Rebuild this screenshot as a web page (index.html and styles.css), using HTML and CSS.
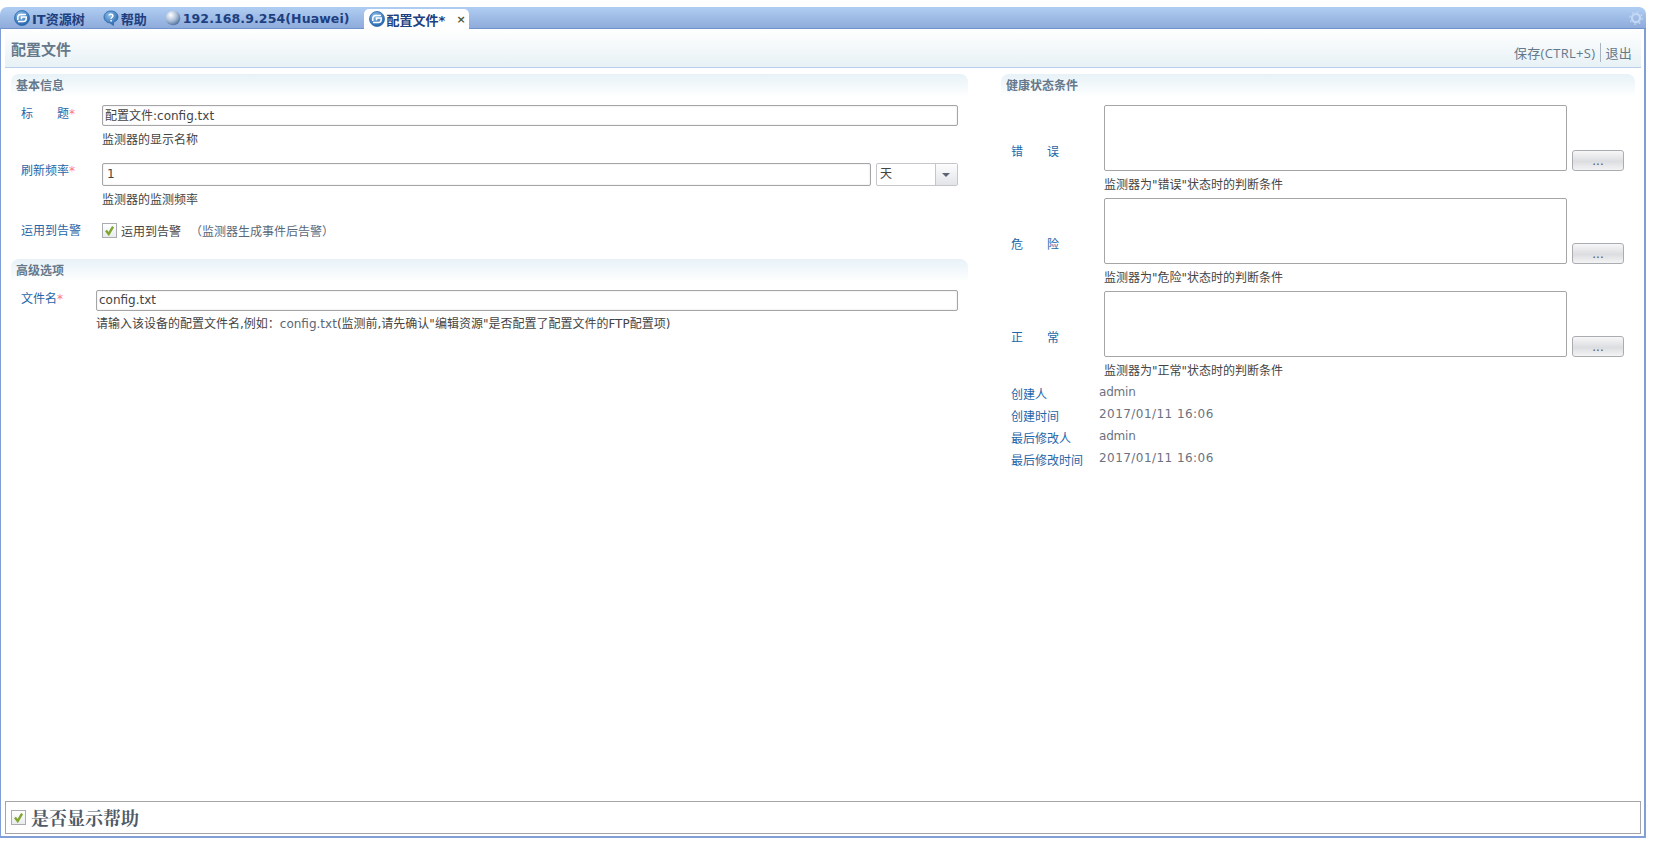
FILE: index.html
```html
<!DOCTYPE html>
<html lang="zh-CN">
<head>
    <meta charset="UTF-8">
    <title>配置文件</title>
    <link rel="stylesheet" href="styles.css">
</head>
<body>
    <svg class="svg-defs" width="0" height="0">
        <defs>
            <radialGradient id="blueBall" cx="40%" cy="30%" r="75%">
                <stop offset="0" stop-color="#8fc0ea"/>
                <stop offset="1" stop-color="#1f5fa8"/>
            </radialGradient>
            <radialGradient id="greyBall" cx="35%" cy="30%" r="75%">
                <stop offset="0" stop-color="#ffffff"/>
                <stop offset="0.55" stop-color="#a9bdd6"/>
                <stop offset="1" stop-color="#4d6f9c"/>
            </radialGradient>
            <symbol id="swirl" viewBox="0 0 16 16">
                <circle cx="8" cy="8" r="7.5" fill="url(#blueBall)" stroke="#2a6aad" stroke-width="0.8"/>
                <path d="M12 4.5H6.5C4.5 4.5 3.8 6 3.8 7.5V10M4 11.5H9.5C11.5 11.5 12.2 10 12.2 8.5V7H7.5V9.2" fill="none" stroke="#fff" stroke-width="1.5"/>
            </symbol>
        </defs>
    </svg>

    <div class="window">
        <div class="tabbar">
            <a class="tab"><svg class="tab-icon"><use href="#swirl"/></svg>IT资源树</a>
            <a class="tab">
                <svg class="tab-icon" viewBox="0 0 16 16">
                    <path d="M8 1C3.8 1 1 3.7 1 7c0 3.2 2.6 5.8 6 5.9L10.5 15.5V12.3C13.3 11.2 15 9.4 15 7c0-3.3-2.8-6-7-6Z" fill="url(#blueBall)" stroke="#2a6aad" stroke-width="0.8"/>
                    <path d="M6 5.3C6.3 4 9.8 3.9 9.9 5.8 10 7.2 8.2 7.2 8.1 8.8M8.1 10v1.4" fill="none" stroke="#fff" stroke-width="1.5"/>
                </svg>帮助
            </a>
            <a class="tab tab-ip">
                <svg class="tab-icon" viewBox="0 0 16 16">
                    <circle cx="8" cy="8" r="7.3" fill="url(#greyBall)"/>
                </svg>192.168.9.254(Huawei)
            </a>
            <a class="tab tab-active">
                <svg class="tab-icon"><use href="#swirl"/></svg>配置文件*
                <span class="tab-close">×</span>
            </a>
            <svg class="gear" viewBox="0 0 16 16">
                <circle cx="8" cy="8" r="4.6" fill="none" stroke="#c3d8f2" stroke-width="2.6"/>
                <circle cx="8" cy="8" r="7" fill="none" stroke="#c3d8f2" stroke-width="1.6" stroke-dasharray="2 3.5"/>
            </svg>
        </div>

        <div class="panel">
            <div class="page-head">
                <h1>配置文件</h1>
                <div class="page-actions"><a>保存(CTRL+S)</a><a>退出</a></div>
            </div>

            <div class="columns">
                <div class="col-left">
                    <h2 class="section-head">基本信息</h2>
                    <div class="form-row row-title">
                        <label class="field-label">标&emsp;&emsp;题<em>*</em></label>
                        <div>
                            <input class="text-input" type="text" value="配置文件:config.txt">
                            <p class="hint">监测器的显示名称</p>
                        </div>
                    </div>
                    <div class="form-row row-freq">
                        <label class="field-label">刷新频率<em>*</em></label>
                        <div>
                            <div class="freq-inputs">
                                <input class="text-input freq-input" type="text" value="1">
                                <div class="select-box"><span>天</span><i class="select-arrow"></i></div>
                            </div>
                            <p class="hint">监测器的监测频率</p>
                        </div>
                    </div>
                    <div class="form-row row-alert">
                        <label class="field-label">运用到告警</label>
                        <div class="alert-field">
                            <span class="check"><svg viewBox="0 0 14 14"><path d="M2.5 7 6 11.5 11.5 2" fill="none" stroke="#7fa52e" stroke-width="3"/></svg></span>
                            <span class="alert-text">运用到告警</span>
                            <span class="alert-note">（监测器生成事件后告警）</span>
                        </div>
                    </div>

                    <h2 class="section-head section-adv">高级选项</h2>
                    <div class="form-row row-file">
                        <label class="field-label">文件名<em>*</em></label>
                        <div>
                            <input class="text-input" type="text" value="config.txt">
                            <p class="hint">请输入该设备的配置文件名,例如：<span class="hint-code">config.txt</span>(监测前,请先确认"编辑资源"是否配置了配置文件的FTP配置项)</p>
                        </div>
                    </div>
                </div>

                <div class="col-right">
                    <h2 class="section-head">健康状态条件</h2>
                    <div class="cond-row">
                        <label class="field-label">错&emsp;&emsp;误</label>
                        <div>
                            <div class="cond-inputs"><textarea class="cond-area"></textarea><button class="more-btn">...</button></div>
                            <p class="hint">监测器为"错误"状态时的判断条件</p>
                        </div>
                    </div>
                    <div class="cond-row">
                        <label class="field-label">危&emsp;&emsp;险</label>
                        <div>
                            <div class="cond-inputs"><textarea class="cond-area"></textarea><button class="more-btn">...</button></div>
                            <p class="hint">监测器为"危险"状态时的判断条件</p>
                        </div>
                    </div>
                    <div class="cond-row">
                        <label class="field-label">正&emsp;&emsp;常</label>
                        <div>
                            <div class="cond-inputs"><textarea class="cond-area"></textarea><button class="more-btn">...</button></div>
                            <p class="hint">监测器为"正常"状态时的判断条件</p>
                        </div>
                    </div>
                    <dl class="meta">
                        <dt class="field-label">创建人</dt><dd class="meta-name">admin</dd>
                        <dt class="field-label">创建时间</dt><dd>2017/01/11 16:06</dd>
                        <dt class="field-label">最后修改人</dt><dd class="meta-name">admin</dd>
                        <dt class="field-label">最后修改时间</dt><dd>2017/01/11 16:06</dd>
                    </dl>
                </div>
            </div>

            <div class="help-bar">
                <span class="check"><svg viewBox="0 0 14 14"><path d="M2.5 7 6 11.5 11.5 2" fill="none" stroke="#7fa52e" stroke-width="3"/></svg></span>
                <span class="help-text">是否显示帮助</span>
            </div>
        </div>
    </div>
</body>
</html>
```

FILE: styles.css
```css
* {
    box-sizing: border-box;
    margin: 0;
    padding: 0;
}

html, body {
    height: 100%;
    overflow: hidden;
}

body {
    background: #fff;
    font-family: "DejaVu Sans", "Noto Sans CJK SC", sans-serif;
    font-size: 12px;
    color: #444;
}

.svg-defs {
    position: absolute;
}

.window {
    display: flex;
    flex-direction: column;
    height: 831px;
    width: 1646px;
    margin-top: 7px;
}

/* Tab strip */
.tabbar {
    display: flex;
    align-items: flex-end;
    flex-shrink: 0;
    height: 22px;
    padding-left: 7px;
    background: linear-gradient(#b0cdf2, #8eabdb);
    border-bottom: 1px solid #7093cc;
    border-radius: 7px 7px 0 0;
}

.tab {
    display: flex;
    align-items: center;
    height: 20px;
    padding: 0 9px 0 7px;
    font-size: 13px;
    font-weight: bold;
    color: #1d3f80;
    white-space: nowrap;
}

.tab + .tab {
    padding-left: 9px;
}

.tab-ip {
    font-size: 12.5px;
    letter-spacing: 0.1px;
}

.tab-active.tab-active {
    height: 20px;
    margin-bottom: -1px;
    margin-left: 5px;
    padding: 0 4px 0 5px;
    width: 105px;
    background: #fff;
    border-radius: 5px 5px 0 0;
}

.tab-icon {
    flex-shrink: 0;
    width: 16px;
    height: 16px;
    margin-right: 2px;
}

.tab-close {
    margin-left: auto;
    margin-right: -1px;
    font-size: 11px;
    color: #4d5a35;
}

.gear {
    width: 14px;
    height: 14px;
    margin-left: auto;
    margin-right: 3px;
    margin-bottom: 3px;
}

/* Panel below the tabs */
.panel {
    display: flex;
    flex-direction: column;
    flex: 1;
    min-height: 0;
    padding: 0 3px 2px;
    border: 2px solid #7f9fd6;
    border-top: none;
    border-left-width: 1px;
    border-bottom-width: 2px;
}

.page-head {
    display: flex;
    align-items: center;
    justify-content: space-between;
    flex-shrink: 0;
    height: 39px;
    margin-left: 1px;
    background: linear-gradient(#fff, #e7f1f5);
    border-bottom: 1px solid #b9d0ec;
}

.page-head h1 {
    padding-left: 6px;
    font-size: 15px;
    font-weight: bold;
    color: #66788a;
}

.page-actions {
    display: flex;
    align-items: center;
    margin-top: 8px;
    padding-right: 9px;
    font-family: "Open Sans", "Noto Sans CJK SC", sans-serif;
    font-size: 13px;
    letter-spacing: 0.3px;
    color: #66788a;
}

.page-actions a + a {
    margin-left: 5px;
    padding-left: 4px;
    border-left: 1px solid #a9b4c0;
}

.columns {
    display: flex;
    flex: 1;
    min-height: 0;
}

.col-left {
    width: 964px;
    padding-left: 7px;
    flex-shrink: 0;
}

.col-right {
    width: 634px;
    margin-left: 33px;
    flex-shrink: 0;
}

.section-head {
    height: 23px;
    margin-top: 6px;
    padding: 2px 0 0 5px;
    font-size: 12px;
    font-weight: bold;
    color: #66788a;
    background: linear-gradient(#e7f2f7, #fff);
    border-radius: 8px 8px 0 0;
}

.section-adv {
    margin-top: 20px;
}

/* Form rows */
.field-label {
    font-size: 12px;
    color: #1f66a8;
    line-height: 16px;
    white-space: nowrap;
}

.field-label em {
    font-style: normal;
    color: #f77;
}

.form-row {
    display: grid;
    grid-template-columns: 81px 856px;
    padding-left: 10px;
}

.row-title {
    margin-top: 8px;
}

.row-title .field-label {
    margin-top: 1px;
}

.row-freq {
    margin-top: 15px;
}

.row-alert {
    margin-top: 14px;
}

.row-alert .field-label {
    margin-top: 1px;
}

.row-file {
    grid-template-columns: 75px 862px;
    margin-top: 8px;
}

.row-file .field-label {
    margin-top: 1px;
}

.row-file .hint {
    margin-top: 5px;
}

.text-input {
    display: block;
    width: 100%;
    height: 21px;
    padding: 0 2px 2px;
    font: 12px "DejaVu Sans", "Noto Sans CJK SC", sans-serif;
    color: #444;
    background: #fff;
    border: 1px solid #a5a5a8;
    border-radius: 2px;
    box-shadow: inset 0 0 2px #dcdce0;
}

.freq-inputs {
    display: flex;
    gap: 5px;
}

.freq-input {
    flex: 1;
    height: 23px;
    padding-left: 4px;
}

.select-box {
    display: flex;
    width: 82px;
    height: 23px;
    border: 1px solid #c4c6cc;
    border-radius: 2px;
}

.select-box span {
    flex: 1;
    padding-left: 3px;
    line-height: 21px;
}

.select-arrow {
    position: relative;
    width: 22px;
    background: linear-gradient(#fdfdfe, #e2e4e8);
    border-left: 1px solid #c4c6cc;
}

.select-arrow::after {
    content: "";
    position: absolute;
    top: 9px;
    left: 6px;
    border: 4px solid transparent;
    border-top-color: #5b6373;
}

.hint {
    margin-top: 6px;
    line-height: 16px;
    color: #444;
    white-space: nowrap;
}

.hint-code {
    color: #5a6878;
}

.alert-field {
    display: flex;
    align-items: center;
    height: 16px;
}

.check {
    display: block;
    flex-shrink: 0;
    width: 15px;
    height: 15px;
    padding: 1px;
    background: linear-gradient(#fff, #e9ebee);
    border: 1px solid #a9adb2;
}

.check svg {
    display: block;
    width: 100%;
    height: 100%;
}

.alert-text {
    margin-left: 4px;
}

.alert-note {
    margin-left: 9px;
    color: #5a6878;
}

/* Health condition rows */
.cond-row {
    display: grid;
    grid-template-columns: 93px 1fr;
    align-items: center;
    padding-left: 10px;
    margin-bottom: 5px;
}

.cond-row .field-label {
    position: relative;
    top: 3px;
}

.section-head + .cond-row {
    margin-top: 8px;
}

.cond-inputs {
    display: flex;
    align-items: flex-end;
    gap: 5px;
}

.cond-area {
    display: block;
    width: 463px;
    height: 66px;
    resize: none;
    background: #fff;
    border: 1px solid #a5a5a8;
    border-radius: 2px;
}

.more-btn {
    width: 52px;
    height: 21px;
    font: 12px "DejaVu Sans", sans-serif;
    color: #555;
    background: linear-gradient(#f7f7f8, #dcdde0 55%, #f4f4f5);
    border: 1px solid #a9adb2;
    border-radius: 3px;
}

.meta {
    display: grid;
    grid-template-columns: 88px 1fr;
    grid-auto-rows: 22px;
    padding-left: 10px;
    margin-top: 3px;
}

.meta .field-label {
    padding-top: 3px;
}

.meta dd {
    font-size: 12px;
    line-height: 16px;
    color: #6b7280;
    letter-spacing: 0.45px;
}

.meta .meta-name {
    letter-spacing: -0.2px;
}

/* Footer checkbox */
.help-bar {
    display: flex;
    align-items: center;
    flex-shrink: 0;
    gap: 5px;
    height: 33px;
    margin-left: 1px;
    padding-left: 5px;
    font-family: "DejaVu Serif", "Noto Serif CJK SC", "Noto Sans CJK SC", serif;
    font-size: 18px;
    font-weight: bold;
    color: #505a66;
    background: #fff;
    border: 1px solid #a5a5a8;
}

.help-text {
    position: relative;
    top: -1px;
}
```
